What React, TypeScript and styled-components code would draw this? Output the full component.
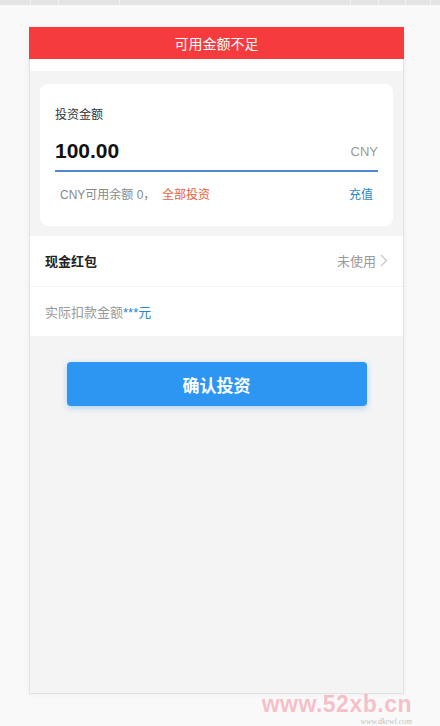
import styled, { createGlobalStyle } from 'styled-components';

const GlobalStyle = createGlobalStyle`
  html, body {
    margin: 0;
    padding: 0;
    background: #f9f9f9;
    font-family: 'Noto Sans CJK SC', 'Liberation Sans', sans-serif;
  }
`;

const cn = `'Liberation Sans', 'Noto Sans CJK SC', sans-serif`;

const Ruler = styled.div`
  height: 5px;
  background: #e4e4e4;
  display: flex;
`;

const Tick = styled.span<{ $left: number }>`
  width: 1px;
  height: 5px;
  background: #f2f2f2;
  margin-left: ${({ $left }) => $left}px;
`;

const Stage = styled.div`
  position: relative;
  padding: 22px 0 0 29px;
  height: 721px;
  box-sizing: border-box;
`;

const Phone = styled.div`
  width: 375px;
  height: 667px;
  box-sizing: border-box;
  border: 1px solid #e2e2e2;
  background: #f4f4f4;
  box-shadow: 0 0 6px rgba(0, 0, 0, 0.06);
  display: flex;
  flex-direction: column;
`;

const Banner = styled.div`
  height: 32px;
  background: #f63b3e;
  color: #fff;
  font-family: ${cn};
  font-size: 14px;
  display: flex;
  align-items: center;
  justify-content: center;
  margin: -1px -1px 0;
`;

const Spacer = styled.div`
  height: 12px;
  background: #fff;
`;

const Body = styled.div`
  padding: 13px 10px 10px;
`;

const Card = styled.div`
  background: #fff;
  border-radius: 8px;
  padding: 23px 15px 0;
  height: 142px;
  box-sizing: border-box;
`;

const Label = styled.div`
  font-family: ${cn};
  font-size: 12px;
  color: #333;
  line-height: 17px;
`;

const AmountRow = styled.div`
  display: flex;
  align-items: center;
  justify-content: space-between;
  margin-top: 14px;
  padding-bottom: 6px;
  border-bottom: 2px solid #4f87d3;
`;

const Amount = styled.span`
  font-family: 'Liberation Sans', Arial, sans-serif;
  font-weight: bold;
  font-size: 21px;
  color: #111;
  line-height: 26px;
`;

const Unit = styled.span`
  font-family: 'Liberation Sans', Arial, sans-serif;
  font-size: 13px;
  color: #999;
`;

const Foot = styled.div`
  display: flex;
  justify-content: space-between;
  align-items: center;
  padding: 13px 5px 0;
  font-family: ${cn};
  font-size: 12px;
  color: #888;
`;

const Link = styled.span<{ $tone: 'red' | 'blue' }>`
  color: ${({ $tone }) => ($tone === 'red' ? '#e5613d' : '#2a86c8')};
`;

const Section = styled.div`
  background: #fff;
  margin: 10px -10px 0;
`;

const Row = styled.div<{ $h: number; $line?: boolean }>`
  height: ${({ $h }) => $h}px;
  display: flex;
  align-items: center;
  justify-content: space-between;
  padding: 0 15px;
  border-bottom: ${({ $line }) => ($line ? '1px solid #f3f3f3' : 'none')};
  font-family: ${cn};
`;

const RowTitle = styled.span`
  font-size: 13px;
  font-weight: bold;
  color: #222;
  margin-top: -2px;
`;

const RowValue = styled.span`
  font-size: 13px;
  color: #999;
  display: flex;
  align-items: center;
  gap: 4px;
  margin-top: -2px;
`;

const Muted = styled.span`
  font-size: 13px;
  color: #999;
`;

const Stars = styled.span`
  color: #2a86c8;
`;

const ButtonWrap = styled.div`
  display: flex;
  justify-content: center;
  padding-top: 26px;
`;

const Button = styled.button`
  width: 300px;
  height: 44px;
  border: none;
  border-radius: 4px;
  background: #2d96f2;
  color: #fff;
  font-family: ${cn};
  font-size: 17px;
  font-weight: bold;
  box-shadow: 0 2px 6px rgba(45, 150, 242, 0.35);
`;

const Watermark = styled.div`
  position: absolute;
  right: 28px;
  bottom: 0;
  text-align: right;
  pointer-events: none;
`;

const WmMain = styled.div`
  font-family: 'Liberation Sans', Arial, sans-serif;
  font-weight: bold;
  font-size: 23px;
  color: rgba(240, 120, 140, 0.45);
  letter-spacing: 0.5px;
  line-height: 28px;
`;

const WmSub = styled.div`
  font-family: 'Liberation Serif', serif;
  font-style: italic;
  font-size: 8px;
  line-height: 8px;
  color: rgba(150, 150, 150, 0.6);
`;

const ticks = [30, 27, 60, 230, 27, 26, 24];

export default function App() {
  return (
    <>
      <GlobalStyle />
      <Ruler>
        {ticks.map((t, i) => (
          <Tick key={i} $left={t} />
        ))}
      </Ruler>
      <Stage>
        <Phone>
          <Banner>可用金额不足</Banner>
          <Spacer />
          <Body>
            <Card>
              <Label>投资金额</Label>
              <AmountRow>
                <Amount>100.00</Amount>
                <Unit>CNY</Unit>
              </AmountRow>
              <Foot>
                <span>
                  CNY可用余额 0，&nbsp;&nbsp;<Link $tone="red">全部投资</Link>
                </span>
                <Link $tone="blue">充值</Link>
              </Foot>
            </Card>
            <Section>
              <Row $h={50} $line>
                <RowTitle>现金红包</RowTitle>
                <RowValue>
                  未使用
                  <svg width="8" height="13" viewBox="0 0 8 13">
                    <path d="M1 1l5.5 5.5L1 12" fill="none" stroke="#c8c8c8" strokeWidth="1.3" />
                  </svg>
                </RowValue>
              </Row>
              <Row $h={49}>
                <Muted>
                  实际扣款金额<Stars>***元</Stars>
                </Muted>
              </Row>
            </Section>
            <ButtonWrap>
              <Button>确认投资</Button>
            </ButtonWrap>
          </Body>
        </Phone>
        <Watermark>
          <WmMain>www.52xb.cn</WmMain>
          <WmSub>www.dkewl.com</WmSub>
        </Watermark>
      </Stage>
    </>
  );
}
